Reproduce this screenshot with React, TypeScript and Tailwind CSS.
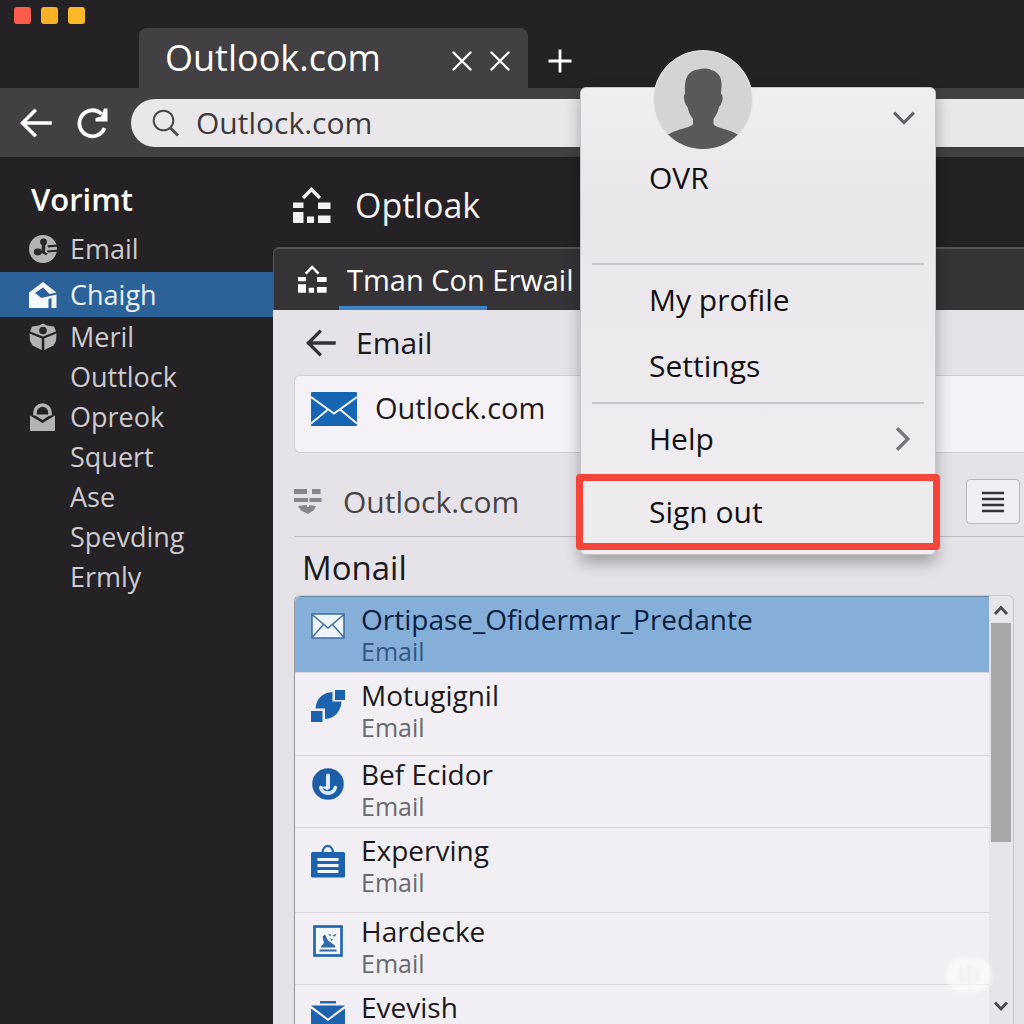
import React from "react";

type IconProps = { className?: string };

function CloseIcon() {
  return (
    <svg viewBox="0 0 20 20" className="size-5" fill="none" stroke="currentColor" strokeWidth="2.4" strokeLinecap="round" aria-hidden="true">
      <path d="M1.5 1.5 18.5 18.5M18.5 1.5 1.5 18.5" />
    </svg>
  );
}

function PlusIcon() {
  return (
    <svg viewBox="0 0 24 24" className="size-6" fill="none" stroke="currentColor" strokeWidth="2.8" aria-hidden="true">
      <path d="M12 0.5V23.5M0.5 12H23.5" />
    </svg>
  );
}

function ArrowLeftIcon({ className }: IconProps) {
  return (
    <svg viewBox="0 0 32 30" className={className} fill="none" stroke="currentColor" strokeWidth="3.6" strokeLinecap="square" aria-hidden="true">
      <path d="M3 15H30M14.5 3 2.5 15 14.5 27" />
    </svg>
  );
}

function ReloadIcon() {
  return (
    <svg viewBox="0 0 32 32" className="size-8" aria-hidden="true">
      <path d="M28.5 21A13 13 0 1 1 25.5 7" fill="none" stroke="currentColor" strokeWidth="3.8" />
      <path d="M31.5 1.500V14.500H19.500V11L25 9.500 28 1.500Z" fill="currentColor" />
    </svg>
  );
}

function SearchIcon() {
  return (
    <svg viewBox="0 0 28 28" className="size-7" fill="none" stroke="currentColor" strokeWidth="2" aria-hidden="true">
      <circle cx="11.5" cy="11.5" r="9.8" />
      <path d="M18.5 19 26 26.5" strokeWidth="2.8" />
    </svg>
  );
}

function HouseBlocksIcon({ className }: IconProps) {
  return (
    <svg viewBox="0 0 38 36" className={className} aria-hidden="true">
      <path d="M10 11 18.5 2.5 27 11" fill="none" stroke="currentColor" strokeWidth="3.4" />
      <g fill="currentColor">
        <path d="M0 15.5H10.5V21H0ZM25 15.5H37.5V22H25ZM0 25H10.5V36H0ZM14 29.5H21V36H14ZM25 28.5H37.5V36H25Z" />
      </g>
    </svg>
  );
}

function GlobeIcon() {
  return (
    <svg viewBox="0 0 28 28" className="size-7" aria-hidden="true">
      <circle cx="14" cy="14" r="14" fill="#b3b2b4" />
      <g fill="#29272a">
        <circle cx="14.5" cy="7" r="3.4" />
        <ellipse cx="8.8" cy="17" rx="4" ry="3.4" />
        <path d="M13 8h3.5l-.6 9 3 1.5-2 1.8-4-2.3-2 1.5 1.6-4Z" />
        <path d="M18.5 10.2 28 9.5v2.2l-9 .8ZM18 15.5l10-.7v2l-9.5.8Z" />
      </g>
    </svg>
  );
}

function OpenMailIcon() {
  return (
    <svg viewBox="0 0 28 28" className="size-7" aria-hidden="true">
      <path d="M0 11.5 14 1 27.5 11.5 20.5 13 14 6.5 6 12 12.500 17 27.500 13.500V27H22.500V17L19.500 18V27H0Z" fill="#f4f8ff" />
    </svg>
  );
}

function BoxIcon() {
  return (
    <svg viewBox="0 0 28 28" className="size-7" aria-hidden="true">
      <g fill="#b3b2b4">
        <path d="M3 3.500 10 2.500 14 .5 18 2.500 25 3.500 27 8.500 14 13.500 1 8.500Z" />
        <path d="M.5 10.500 12.700 15.500V27L3.500 22.500 1 18Z" />
        <path d="M27.500 10.500 15.300 15.500V27L24.500 22.500 27 18Z" />
      </g>
      <circle cx="14" cy="7.500" r="3.800" fill="#29272a" />
    </svg>
  );
}

function LockMailIcon() {
  return (
    <svg viewBox="0 0 28 28" className="size-7" aria-hidden="true">
      <path d="M6 12.500V9.500a7 7 0 0 1 15 0v3" fill="none" stroke="#b3b2b4" strokeWidth="3.600" />
      <path d="M1 12.500 13.500 20 26 12.500V28H1Z" fill="#b3b2b4" />
      <path d="M5 11.500H22L13.500 17Z" fill="#b3b2b4" />
    </svg>
  );
}

function EnvelopeIcon() {
  return (
    <svg viewBox="0 0 46 34" className="h-[34px] w-[46px]" aria-hidden="true">
      <rect width="46" height="34" rx="1" fill="#1766b3" />
      <path d="M0 5 23 21.500 46 5M0 31.500 17 17.500M46 31.500 29 17.500" fill="none" stroke="#eef5ff" strokeWidth="2" />
    </svg>
  );
}

function FilterIcon() {
  return (
    <svg viewBox="0 0 28 26" className="h-[26px] w-7" fill="#88868a" aria-hidden="true">
      <path d="M0 0H13V5H0ZM18 0H26.500V5H18ZM0 9H14V13H0ZM15.500 9H27.500V13H15.500ZM4 17 13 16V18H15V16L22 17 20 21 14 25 7 21.500Z" />
    </svg>
  );
}

function LightEnvelopeIcon() {
  return (
    <svg viewBox="0 0 34 26" className="h-[26px] w-[34px]" aria-hidden="true">
      <rect x="1" y="1" width="32" height="24" fill="#edf4fd" stroke="#3c6c9f" strokeWidth="1.500" />
      <path d="M1 1.500 17 15 33 1.500M1 24.500 12.500 11.500M33 24.500 21.500 11.500" fill="none" stroke="#3c6c9f" strokeWidth="1.400" />
    </svg>
  );
}

function SyncIcon() {
  return (
    <svg viewBox="0 0 34 34" className="size-[34px]" fill="#1c62ae" aria-hidden="true">
      <path d="M4.500 19.500C5.500 9 12 3.500 21.500 3V12.500H30.500C30 22 24 29.500 14 30V19.500Z" />
      <path d="M24 1H34V11H24ZM0 22H11.500V33H0Z" />
    </svg>
  );
}

function DownCircleIcon() {
  return (
    <svg viewBox="0 0 32 32" className="size-8" aria-hidden="true">
      <circle cx="16" cy="16" r="15.800" fill="#1c5fa8" />
      <path d="M8.700 19.500C10 27 22 27 23.300 19.500" fill="none" stroke="#dcebfd" strokeWidth="3.600" strokeLinecap="round" />
      <path d="M16 7.500V19.500" fill="none" stroke="#dcebfd" strokeWidth="4" strokeLinecap="round" />
      <path d="M9 19 16 22.500V18Z" fill="#dcebfd" />
    </svg>
  );
}

function BriefcaseIcon() {
  return (
    <svg viewBox="0 0 34 34" className="size-[34px]" aria-hidden="true">
      <path d="M11.500 9C12 -.5 21.500 -.5 22 9" fill="none" stroke="#2767a8" strokeWidth="2.200" />
      <rect y="8" width="34" height="25.500" rx="1.500" fill="#1c62ae" />
      <path d="M6.500 15.500H27.500M6.500 21.500H27.500M6.500 27.500H27.500" stroke="#f0f6ff" strokeWidth="3" />
    </svg>
  );
}

function PictureIcon() {
  return (
    <svg viewBox="0 0 30 32" className="h-8 w-[30px]" aria-hidden="true">
      <rect x="1.500" y="1.500" width="27" height="29" fill="#f3f7fd" stroke="#1c62ae" strokeWidth="2.600" />
      <path d="M6.500 24.500H23.500V26.500H6.500ZM8 21.500 11 18 9.500 11.500 12 9.500 15 15.500 22 20.500V22.500H8ZM15 9.500 17.500 9 18 11.500ZM19 11 23.500 8.500 22 11.500ZM17 13 20 14.500 18.500 16Z" fill="#2e69a9" />
    </svg>
  );
}

function MailBagIcon() {
  return (
    <svg viewBox="0 0 34 32" className="h-8 w-[34px]" aria-hidden="true">
      <path d="M9 0H25V2.500H9Z" fill="#2767a8" />
      <path d="M0 4.500H34L17 17.500ZM0 7.500 17 20 34 7.500V32H0Z" fill="#1c62ae" />
    </svg>
  );
}

function Chevron({ d, className }: { d: string; className: string }) {
  return (
    <svg viewBox="0 0 20 20" className={className} fill="none" stroke="currentColor" strokeWidth="2.800" aria-hidden="true">
      <path d={d} />
    </svg>
  );
}

function Avatar() {
  return (
    <svg viewBox="0 0 100 100" className="size-[100px]" role="img" aria-label="Account picture">
      <defs>
        <clipPath id="avatar-disc">
          <circle cx="50" cy="50" r="49" />
        </clipPath>
      </defs>
      <circle cx="50" cy="50" r="49.500" fill="#d4d3d6" stroke="#e6e5e8" />
      <path
        clipPath="url(#avatar-disc)"
        fill="#5a585b"
        d="M32 44C31 29 34 21 45 19.500 50 18 56 18.500 58 20 66 22 69 28 68.500 36L68 44C71 45 69.500 54 66 57 65 62 63 66 60.500 69V74C62 78 78 79 87 86V100H13V86C22 79 38 78 40 74V69C37.500 66 35.500 62 34.500 57 31 54 30 45 32 44Z"
      />
    </svg>
  );
}

const folders = [
  { label: "Email", icon: <GlobeIcon />, row: "h-[46px]" },
  { label: "Chaigh", icon: <OpenMailIcon />, row: "h-[45px] bg-[#2c6199] text-[#eaf2ff]", active: true },
  { label: "Meril", icon: <BoxIcon />, row: "h-10" },
  { label: "Outtlock", row: "h-10" },
  { label: "Opreok", icon: <LockMailIcon />, row: "h-10" },
  { label: "Squert", row: "h-10" },
  { label: "Ase", row: "h-10" },
  { label: "Spevding", row: "h-10" },
  { label: "Ermly", row: "h-10" },
];

const messages = [
  { title: "Ortipase_Ofidermar_Predante", icon: <LightEnvelopeIcon />, row: "h-[76px] bg-[#85afd8] pt-1", titleColor: "text-[#0c2040]", subColor: "text-[#33577f]" },
  { title: "Motugignil", icon: <SyncIcon />, row: "h-[83px] pt-1" },
  { title: "Bef Ecidor", icon: <DownCircleIcon />, row: "h-[72px]" },
  { title: "Experving", icon: <BriefcaseIcon />, row: "h-[85px] pt-1" },
  { title: "Hardecke", icon: <PictureIcon />, row: "h-[72px]" },
  { title: "Evevish", icon: <MailBagIcon />, row: "h-[80px] pt-1" },
];

function TitleBar() {
  return (
    <header className="flex h-[88px] shrink-0 bg-[#242224]">
      <div className="flex w-[139px] shrink-0 gap-[10px] pt-[7px] pl-[14px]">
        <button aria-label="Close window" className="size-[17px] rounded-[3px] bg-[#fb5b4d]" />
        <button aria-label="Minimize window" className="size-[17px] rounded-[3px] bg-[#fdb128]" />
        <button aria-label="Zoom window" className="size-[17px] rounded-[3px] bg-[#fdb827]" />
      </div>
      <div className="mt-7 flex w-[389px] items-center rounded-t-lg bg-[#424042] pr-[18px] pl-[26px] text-white">
        <span className="flex-1 text-[36px] leading-[60px] font-medium">Outlook.com</span>
        <button aria-label="Stop" className="mt-1.5 mr-[18px]"><CloseIcon /></button>
        <button aria-label="Close tab" className="mt-1.5"><CloseIcon /></button>
      </div>
      <button aria-label="New tab" className="mt-7 ml-5 flex items-center pt-1.5 text-white">
        <PlusIcon />
      </button>
    </header>
  );
}

function Toolbar() {
  return (
    <div className="flex h-[69px] shrink-0 items-center bg-[#424042] pl-5 text-white">
      <button aria-label="Back"><ArrowLeftIcon className="h-[30px] w-8" /></button>
      <button aria-label="Reload" className="ml-6"><ReloadIcon /></button>
      <label className="ml-[23px] flex h-12 flex-1 items-center rounded-l-full bg-[#e9e7ea] pl-[21px] text-[#4a484b]">
        <SearchIcon />
        <span className="sr-only">Address</span>
        <input defaultValue="Outlock.com" className="ml-4 h-12 min-w-0 flex-1 bg-transparent text-[30px] text-[#3b393c] outline-none" />
      </label>
    </div>
  );
}

function Sidebar() {
  return (
    <nav className="w-[273px] shrink-0 pt-4 text-[27px] leading-9 text-[#cdcbd0]" aria-label="Folders">
      <h2 className="h-[53px] pl-[31px] text-[31px] leading-[52px] font-semibold text-white">Vorimt</h2>
      {folders.map((f) => (
        <a key={f.label} href="#" aria-current={f.active ? "page" : undefined} className={`flex items-center pl-[29px] ${f.row}`}>
          <span className="mr-[13px] w-7">{f.icon}</span>
          {f.label}
        </a>
      ))}
    </nav>
  );
}

function MessageList() {
  return (
    <div className="mr-[10px] ml-[21px] flex min-h-0 flex-1 rounded-t-md border border-b-0 border-[#c9c7cb] border-l-[#9b999f] bg-[#e7e5e9]">
      <ul className="min-w-0 flex-1 overflow-hidden rounded-tl-md border-t border-[#6988a8] bg-[#f1eff3]">
        {messages.map((m) => (
          <li key={m.title} className={`border-b border-[#d6d4d8] ${m.row}`}>
            <a href="#" className="flex pl-4">
              <span className="mt-3 flex w-[34px] shrink-0 items-start justify-center">{m.icon}</span>
              <span className="ml-4 flex flex-col">
                <span className={`text-[28px] leading-9 ${m.titleColor ?? "text-[#1b191c]"}`}>{m.title}</span>
                <span className={`text-[25px] leading-7 ${m.subColor ?? "text-[#6b696d]"}`}>Email</span>
              </span>
            </a>
          </li>
        ))}
      </ul>
      <div className="flex w-6 flex-col items-center text-[#4b494c]">
        <button aria-label="Scroll up" className="flex h-[27px] w-full items-center justify-center">
          <Chevron d="M4 14 10 7.500 16 14" className="size-5" />
        </button>
        <div className="h-[219px] w-5 bg-[#a9a7aa]" />
        <button aria-label="Scroll down" className="mt-auto mb-2 flex h-5 w-full items-center justify-center">
          <Chevron d="M4 6.500 10 13 16 6.500" className="size-5" />
        </button>
      </div>
    </div>
  );
}

function AccountMenu() {
  return (
    <div className="absolute top-[87px] right-[88px] z-10 flex h-[468px] w-[356px] flex-col rounded-md border border-[#c6c4c8] bg-linear-to-b from-[#f0eef1] via-[#e8e6e9] via-25% to-[#f1eff2] text-[30px] leading-10 text-[#121013] shadow-[0_8px_16px_rgba(0,0,0,0.3)]">
      <div className="absolute -top-[38px] left-[72px]"><Avatar /></div>
      <button aria-label="Switch account" className="absolute top-[18px] right-5 text-[#656367]">
        <Chevron d="M1 6 10 15 19 6" className="size-[22px]" />
      </button>
      <div className="mx-[11px] h-[177px] border-b-2 border-[#c9c7cb] pt-[70px] pl-[57px]">OVR</div>
      <div className="mx-[11px] flex h-[139px] flex-col border-b-2 border-[#c9c7cb] pt-[15px] pl-[57px]">
        <button className="mb-[26px] text-left">My profile</button>
        <button className="text-left">Settings</button>
      </div>
      <button className="flex h-[70px] items-center justify-between pr-5 pl-[68px]">
        Help
        <Chevron d="M5 1 14 10 5 19" className="size-6 text-[#777579]" />
      </button>
      <button className="-mx-[5px] h-[76px] rounded-sm border-[7px] border-[#f4453b] bg-[#edebed] pl-[66px] text-left">Sign out</button>
    </div>
  );
}

export default function App() {
  return (
    <div className="relative flex h-screen flex-col overflow-hidden bg-[#242224] font-['Open_Sans','Noto_Sans',sans-serif]">
      <TitleBar />
      <Toolbar />
      <div className="flex min-h-0 flex-1">
        <Sidebar />
        <main className="flex min-w-0 flex-1 flex-col">
          <h1 className="flex h-[90px] shrink-0 items-center pt-1.5 pl-5 text-[34px] text-[#f3f1f4]">
            <HouseBlocksIcon className="mr-6 h-9 w-[38px]" />
            Optloak
          </h1>
          <div className="flex h-[63px] shrink-0 rounded-tl-md border-t-2 border-l border-[#555356] bg-[#353336] pl-6 text-white">
            <HouseBlocksIcon className="mt-4 h-7 w-[29px]" />
            <button className="relative ml-5 text-[29px] leading-[60px] whitespace-nowrap">
              Tman Con Erwail
              <span className="absolute bottom-0 -left-2 h-1 w-[148px] bg-[#3a86c8]" />
            </button>
          </div>
          <div className="flex min-h-0 flex-1 flex-col bg-[#e5e3e7]">
            <div className="flex h-[65px] shrink-0 items-center pl-[33px] text-[30px] text-[#1b191c]">
              <button aria-label="Back to email" className="mr-5"><ArrowLeftIcon className="h-7 w-[30px] text-[#343236]" /></button>
              Email
            </div>
            <a href="#" className="ml-[21px] flex h-[78px] shrink-0 rounded-l-md border border-r-0 border-[#cfcdd2] bg-[#f4f2f6] pt-4 pl-4 text-[29px] leading-8 text-[#1b191c]">
              <EnvelopeIcon />
              <span className="ml-[18px]">Outlock.com</span>
            </a>
            <div className="ml-[21px] flex h-[84px] shrink-0 items-center border-b border-[#bfbdc1] pt-3.5 pr-1 text-[30px] text-[#454346]">
              <FilterIcon />
              <span className="ml-[21px] flex-1">Outlock.com</span>
              <button aria-label="List view" className="flex h-[45px] w-[54px] items-center justify-center rounded border border-[#b9b7bb] bg-[#f0eef2]">
                <svg viewBox="0 0 24 22" className="h-[22px] w-6" stroke="#353336" strokeWidth="2.400" aria-hidden="true">
                  <path d="M1 2H23M1 8H23M1 14H23M1 20H23" />
                </svg>
              </button>
            </div>
            <h2 className="h-[58px] shrink-0 pt-2 pl-[29px] text-[33px] leading-[46px] text-[#1b191c]">Monail</h2>
            <MessageList />
          </div>
        </main>
      </div>
      <AccountMenu />
      <div className="absolute right-8 bottom-8 flex h-[34px] w-[46px] items-center justify-center gap-1 rounded-full bg-white/60 blur-[2px]">
        <span className="h-4 w-1 bg-[#efedf0]" />
        <span className="h-5 w-1 bg-[#efedf0]" />
        <span className="h-4 w-1 bg-[#efedf0]" />
      </div>
    </div>
  );
}
